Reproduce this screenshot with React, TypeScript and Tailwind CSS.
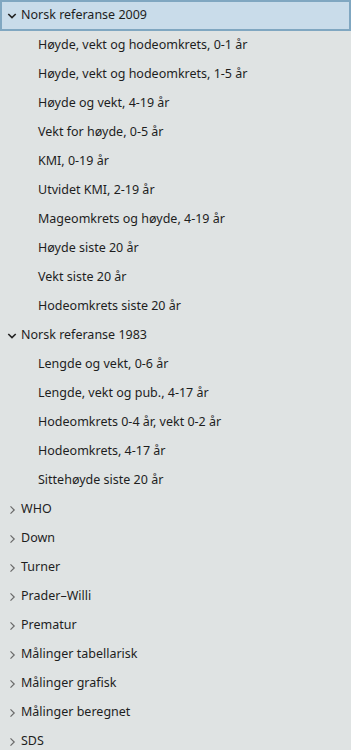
import React from "react";

const groups: { title: string; open: boolean; items: string[] }[] = [
  {
    title: "Norsk referanse 2009",
    open: true,
    items: [
      "Høyde, vekt og hodeomkrets, 0-1 år",
      "Høyde, vekt og hodeomkrets, 1-5 år",
      "Høyde og vekt, 4-19 år",
      "Vekt for høyde, 0-5 år",
      "KMI, 0-19 år",
      "Utvidet KMI, 2-19 år",
      "Mageomkrets og høyde, 4-19 år",
      "Høyde siste 20 år",
      "Vekt siste 20 år",
      "Hodeomkrets siste 20 år",
    ],
  },
  {
    title: "Norsk referanse 1983",
    open: true,
    items: [
      "Lengde og vekt, 0-6 år",
      "Lengde, vekt og pub., 4-17 år",
      "Hodeomkrets 0-4 år, vekt 0-2 år",
      "Hodeomkrets, 4-17 år",
      "Sittehøyde siste 20 år",
    ],
  },
  { title: "WHO", open: false, items: [] },
  { title: "Down", open: false, items: [] },
  { title: "Turner", open: false, items: [] },
  { title: "Prader–Willi", open: false, items: [] },
  { title: "Prematur", open: false, items: [] },
  { title: "Målinger tabellarisk", open: false, items: [] },
  { title: "Målinger grafisk", open: false, items: [] },
  { title: "Målinger beregnet", open: false, items: [] },
  { title: "SDS", open: false, items: [] },
];

function ChevronDown() {
  return (
    <svg width="10" height="10" viewBox="0 0 10 10" className="shrink-0">
      <path d="M1.3 3 L5 6.6 L8.7 3" fill="none" stroke="#222" strokeWidth="1.6" />
    </svg>
  );
}

function ChevronRight() {
  return (
    <svg width="10" height="10" viewBox="0 0 10 10" className="shrink-0">
      <path d="M3.5 1.3 L7.2 5 L3.5 8.7" fill="none" stroke="#6a6a6a" strokeWidth="1.2" />
    </svg>
  );
}

export default function App() {
  return (
    <div
      className="w-[351px] h-[750px] overflow-hidden bg-[#dfe3e3] text-[12.5px] text-[#1e1e1e] pt-[2px]"
      style={{ fontFamily: '"Noto Sans", "Open Sans", sans-serif' }}
    >
      {groups.map((g, gi) => (
        <div key={g.title}>
          <div
            className={
              gi === 0
                ? "h-[31px] -mt-[2px] flex items-center gap-[4px] pl-[5px] border-2 border-[#80a7c1] bg-[#c9dcea] box-border"
                : "h-[29px] flex items-center gap-[4px] pl-[7px]"
            }
          >
            {g.open ? <ChevronDown /> : <ChevronRight />}
            <span>{g.title}</span>
          </div>
          {g.items.map((it) => (
            <div key={it} className="h-[29px] flex items-center pl-[38px]">
              {it}
            </div>
          ))}
        </div>
      ))}
    </div>
  );
}
